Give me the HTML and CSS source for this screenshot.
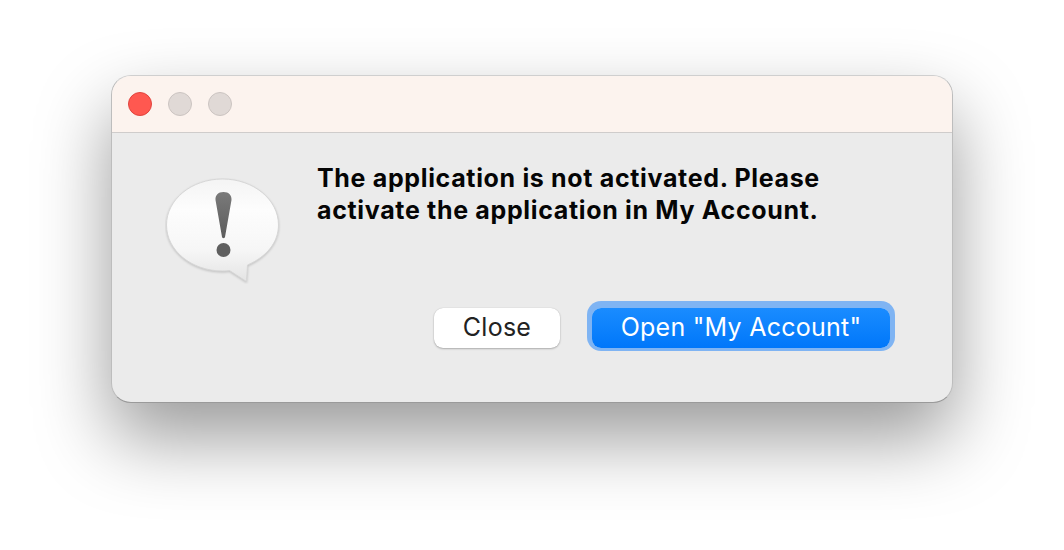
FILE: index.html
```html
<!DOCTYPE html>
<html lang="en">
<head>
<meta charset="utf-8">
<title>Alert</title>
<link rel="stylesheet" href="styles.css">
</head>
<body>
<div class="window">
  <div class="titlebar">
    <span class="light light-close"></span>
    <span class="light"></span>
    <span class="light"></span>
  </div>
  <div class="content">
    <svg class="alert-icon" width="116" height="106" viewBox="0 0 116 106" aria-hidden="true">
      <defs>
        <linearGradient id="bubble" x1="0" y1="0" x2="0" y2="1">
          <stop offset="0" stop-color="#f4f4f4"/>
          <stop offset="0.3" stop-color="#fdfdfd"/>
          <stop offset="0.7" stop-color="#f6f6f6"/>
          <stop offset="1" stop-color="#e4e4e4"/>
        </linearGradient>
        <linearGradient id="mark" x1="0" y1="0" x2="0" y2="1">
          <stop offset="0" stop-color="#7a7a7a"/>
          <stop offset="1" stop-color="#5c5c5c"/>
        </linearGradient>
      </defs>
      <path class="bubble" fill="url(#bubble)" d="M57.500 1C88.500 1 113.500 21.600 113.500 47C113.500 64 102 78.500 82.500 87L81.500 103.500L64.500 92.500C61.500 92.900 60 93 57.500 93C26.500 93 1.500 72.400 1.500 47C1.500 21.600 26.500 1 57.500 1Z"/>
      <path fill="url(#mark)" d="M58.500 14C64 14 66.800 17.500 66.500 22L60 59C59.800 60.500 57.200 60.500 57 59L50.500 22C50.200 17.500 53 14 58.500 14Z"/>
      <circle cx="58.500" cy="72" r="7" fill="#5f5f5f"/>
    </svg>
    <div class="main">
      <p class="message">The application is not activated. Please activate the application in My Account.</p>
      <div class="actions">
        <button class="btn btn-plain" type="button">Close</button>
        <button class="btn btn-primary" type="button">Open "My Account"</button>
      </div>
    </div>
  </div>
</div>
</body>
</html>
```
FILE: styles.css
```css
* { box-sizing: border-box; }
html, body { margin: 0; height: 100%; }
body {
  width: 1064px;
  height: 550px;
  overflow: hidden;
  background: #fff;
  padding: 75px 0 0 111px;
  font-family: Inter, "Liberation Sans", sans-serif;
}
.window {
  width: 842px;
  height: 328px;
  border-radius: 20px;
  background: #ebebeb;
  overflow: hidden;
  border: 1px solid #bdbdbd;
  border-top-color: #cfcfcf;
  border-bottom-color: #9a9a9a;
  box-shadow: 0 35px 75px rgba(0, 0, 0, 0.4);
}
.titlebar {
  height: 57px;
  background: #fcf3ee;
  border-bottom: 1px solid #cfcccb;
  display: flex;
  align-items: center;
  gap: 16px;
  padding-left: 16px;
}
.light {
  width: 24px;
  height: 24px;
  border-radius: 50%;
  background: #e0d9d6;
  border: 1px solid #cbc4c1;
}
.light-close {
  background: #ff5850;
  border-color: #e0443e;
}
.content {
  display: flex;
  align-items: flex-start;
  padding: 0 57px 0 53px;
}
.alert-icon {
  flex: none;
  margin-top: 45px;
}
.bubble {
  stroke: #d6d6d6;
  stroke-width: 1;
  filter: drop-shadow(0 1px 1px rgba(0, 0, 0, 0.18));
}
.main {
  flex: 1;
  padding: 29px 0 0 36px;
}
.message {
  margin: 0;
  width: 530px;
  font-size: 25px;
  font-weight: 700;
  line-height: 32px;
  letter-spacing: 0.66px;
  color: #050505;
}
.actions {
  display: flex;
  justify-content: flex-end;
  align-items: flex-start;
  gap: 32px;
  margin-top: 82px;
}
.btn {
  font-family: inherit;
  font-size: 25px;
  font-weight: 400;
  border: 0;
  padding: 0 0 2px;
  height: 40px;
  border-radius: 9px;
  letter-spacing: 0.25px;
}
.btn-plain {
  width: 126px;
  background: #fff;
  color: #222;
  box-shadow: 0 1px 2px rgba(0, 0, 0, 0.25), 0 0 1px rgba(0, 0, 0, 0.2);
}
.btn-primary {
  width: 298px;
  margin-right: 5px;
  color: #fff;
  background: linear-gradient(#1a8cff, #0077fa);
  box-shadow: 0 -2px 0 5px #7fb4f3;
}
```
